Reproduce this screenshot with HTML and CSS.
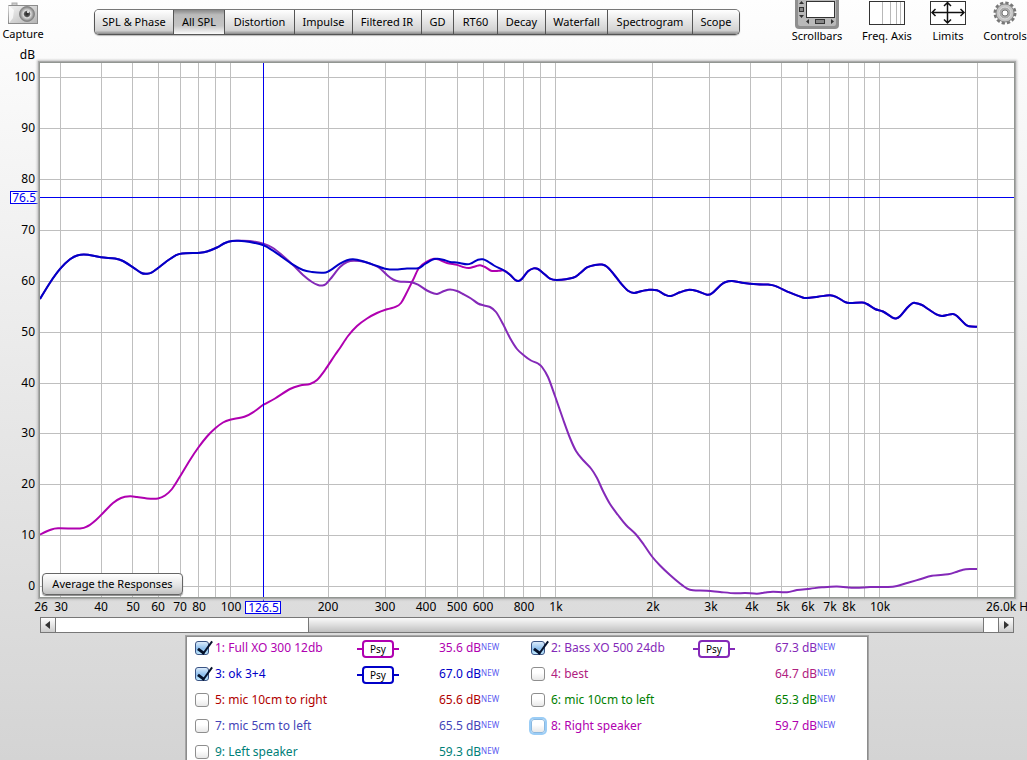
FILE: index.html
```html
<!DOCTYPE html>
<html lang="en">
<head>
<meta charset="utf-8">
<title>All SPL</title>
<link rel="stylesheet" href="styles.css">
</head>
<body>
<header class="top">
  <button class="tool tool-capture" type="button">
    <svg width="32" height="23" viewBox="0 0 32 23" aria-hidden="true">
      <defs>
        <linearGradient id="cam" x1="0" y1="0" x2="1" y2="1"><stop offset="0" stop-color="#f4f4f4"/><stop offset="1" stop-color="#b4b4b4"/></linearGradient>
        <radialGradient id="lens"><stop offset="0" stop-color="#222"/><stop offset=".35" stop-color="#555"/><stop offset=".5" stop-color="#ddd"/><stop offset="1" stop-color="#777"/></radialGradient>
      </defs>
      <rect x="5" y="2" width="5" height="3" fill="#ccc" stroke="#aaa"/>
      <rect x="1.500" y="4.500" width="29" height="18" fill="url(#cam)" stroke="#8c8c8c"/>
      <path d="M1 4l6 5-1 8-4 5" fill="#fff" opacity=".7"/>
      <circle cx="20" cy="13" r="7.500" fill="url(#lens)" stroke="#888"/>
      <circle cx="21" cy="11" r="1" fill="#fff"/>
    </svg>
    <span>Capture</span>
  </button>
  <nav class="tabs" aria-label="Graph">
    <button type="button">SPL &amp; Phase</button>
    <button type="button" class="on" aria-pressed="true">All SPL</button>
    <button type="button">Distortion</button>
    <button type="button">Impulse</button>
    <button type="button">Filtered IR</button>
    <button type="button">GD</button>
    <button type="button">RT60</button>
    <button type="button">Decay</button>
    <button type="button">Waterfall</button>
    <button type="button">Spectrogram</button>
    <button type="button">Scope</button>
  </nav>
  <div class="tools">
    <button class="tool tool-wide" type="button">
      <svg width="44" height="29" viewBox="0 0 44 29" aria-hidden="true">
        <path d="M0 0h44v25a4 4 0 0 1-4 4H4a4 4 0 0 1-4-4z" fill="#8f8f8f"/>
        <path d="M3 0h38v24a2 2 0 0 1-2 2H5a2 2 0 0 1-2-2z" fill="#b9b9b9"/>
        <rect x="11.500" y="1.500" width="28" height="16" fill="#fff" stroke="#333"/>
        <path d="M4 4l2.500-3L9 4zM4 15l2.500 3L9 15zM14 19v5l-3-2.500zM36 19v5l3-2.500z" fill="#333"/>
        <rect x="4.500" y="7.500" width="4" height="4" fill="#888" stroke="#333"/>
        <rect x="20.500" y="19.500" width="9" height="4" fill="#888" stroke="#333"/>
      </svg>
      <span>Scrollbars</span>
    </button>
    <button class="tool tool-wide" type="button">
      <svg width="36" height="29" viewBox="0 0 36 29" aria-hidden="true">
        <rect x=".5" y="1.500" width="35" height="23" fill="#fff" stroke="#333"/>
        <path d="M13.500 2v22M21.500 2v22M27.500 2v22M31.500 2v22" stroke="#b8b8b8"/>
      </svg>
      <span>Freq. Axis</span>
    </button>
    <button class="tool tool-slim" type="button">
      <svg width="36" height="29" viewBox="0 0 36 29" aria-hidden="true">
        <rect x=".5" y="1.500" width="35" height="23" fill="#fff" stroke="#333"/>
        <path d="M2 12.500h32M17.500 3v20M5.500 9L2 12.500 5.500 16M30.500 9l3.500 3.500-3.500 3.500M14 6l3.500-3.500L21 6M14 19.500l3.500 3.500 3.500-3.500" fill="none" stroke="#111" stroke-width="1.500"/>
      </svg>
      <span>Limits</span>
    </button>
    <button class="tool tool-mid" type="button">
      <svg width="24" height="29" viewBox="0 0 24 29" aria-hidden="true">
        <circle cx="12" cy="13" r="10" fill="none" stroke="#777" stroke-width="3" stroke-dasharray="3.200 2.036"/>
        <circle cx="12" cy="13" r="9" fill="#c4c4c4" stroke="#858585"/>
        <circle cx="12" cy="13" r="6" fill="#aaa" stroke="#ddd"/>
        <circle cx="12" cy="13" r="3" fill="#fff" stroke="#777"/>
      </svg>
      <span>Controls</span>
    </button>
  </div>
</header>

<main class="graph">
  <div class="unit">dB</div>
  <svg class="y-axis" id="yAxis" role="img" aria-label="Level axis"></svg>
  <section class="plot">
    <svg class="plot-area" viewBox="40 63 974 534" preserveAspectRatio="none" role="img" aria-label="Measured responses">
      <path id="grid" class="grid-line"/>
      <path id="curveFull" class="curve curve-full"/>
      <path id="curveBass" class="curve curve-bass"/>
      <path id="curveSum" class="curve curve-sum"/>
      <path class="cursor" d="M40 197.500H1014M263.500 63V597"/>
    </svg>
    <button class="average" type="button">Average the Responses</button>
  </section>
  <svg class="x-axis" id="xAxis" role="img" aria-label="Frequency axis"></svg>
  <div class="scroll">
    <button type="button" aria-label="Scroll left"><svg width="6" height="8" viewBox="0 0 6 8"><path d="M5 0v8L0 4z"/></svg></button>
    <div class="track">
      <span class="before"></span><span class="thumb"></span><span class="after"></span>
    </div>
    <button type="button" aria-label="Scroll right"><svg width="6" height="8" viewBox="0 0 6 8"><path d="M1 0v8l5-4z"/></svg></button>
  </div>
  <section class="legend" aria-label="Measurements">
    <div class="item magenta"><input type="checkbox" id="m1" checked><label for="m1">1: Full XO 300 12db</label><span class="psy"><b>Psy</b></span><span class="value">35.6 dB</span><span class="new">NEW</span></div>
    <div class="item violet"><input type="checkbox" id="m2" checked><label for="m2">2: Bass XO 500 24db</label><span class="psy"><b>Psy</b></span><span class="value">67.3 dB</span><span class="new">NEW</span></div>
    <div class="item blue"><input type="checkbox" id="m3" checked><label for="m3">3: ok 3+4</label><span class="psy"><b>Psy</b></span><span class="value">67.0 dB</span><span class="new">NEW</span></div>
    <div class="item rose"><input type="checkbox" id="m4"><label for="m4">4: best</label><span></span><span class="value">64.7 dB</span><span class="new">NEW</span></div>
    <div class="item red"><input type="checkbox" id="m5"><label for="m5">5: mic 10cm to right</label><span></span><span class="value">65.6 dB</span><span class="new">NEW</span></div>
    <div class="item green"><input type="checkbox" id="m6"><label for="m6">6: mic 10cm to left</label><span></span><span class="value">65.3 dB</span><span class="new">NEW</span></div>
    <div class="item indigo"><input type="checkbox" id="m7"><label for="m7">7: mic 5cm to left</label><span></span><span class="value">65.5 dB</span><span class="new">NEW</span></div>
    <div class="item magenta"><input type="checkbox" id="m8" class="focused"><label for="m8">8: Right speaker</label><span></span><span class="value">59.7 dB</span><span class="new">NEW</span></div>
    <div class="item teal"><input type="checkbox" id="m9"><label for="m9">9: Left speaker</label><span></span><span class="value">59.3 dB</span><span class="new">NEW</span></div>
  </section>
</main>
<script src="graph.js"></script>
</body>
</html>
```

FILE: styles.css
```css
* { box-sizing: border-box; }

body {
  margin: 0;
  min-height: 100vh;
  display: flex;
  flex-direction: column;
  overflow: hidden;
  background: linear-gradient(#fefefe, #d4d4d4);
  color: #000;
  font: 12px/16px "Noto Sans", "Open Sans", sans-serif;
}

button { font: inherit; color: inherit; padding: 0; }

.top {
  display: flex;
  align-items: flex-start;
  height: 45px;
  font-size: 11px;
}

.tool {
  display: flex;
  flex-direction: column;
  align-items: center;
  border: 0;
  background: none;
  line-height: 14px;
  white-space: nowrap;
}
.tool svg { display: block; flex: none; }
.tool-capture { width: 46px; padding-top: 1px; gap: 3px; }
.tool-wide { width: 54px; }
.tool-slim { width: 36px; }
.tool-mid { width: 46px; }
.tools { display: flex; gap: 16px; margin: 0 -1px 0 auto; }

.tabs {
  display: grid;
  grid-template-columns: 79px 51px 70px 58px 69px 32px 44px 48px 62px 85px 46px;
  height: 26px;
  margin: 9px 0 0 48px;
  border: 1px solid #555;
  border-top-color: #777;
  border-radius: 5px;
  overflow: hidden;
  box-shadow: 0 1px 1px #bbb;
}
.tabs button {
  border: 0;
  border-right: 1px solid #555;
  background: linear-gradient(#fff, #e9e9e9 40%, #d2d2d2 85%, #8a8a8a);
}
.tabs button:last-child { border-right: 0; }
.tabs .on { background: linear-gradient(#8a8a8a, #bbb 20%, #c4c4c4 65%, #fafafa); }

.graph {
  flex: 1;
  display: grid;
  grid-template-columns: 40px minmax(0, 1fr) 13px;
  grid-template-rows: 18px minmax(200px, 1fr) 20px 16px auto;
}
.unit { padding-right: 5px; text-align: right; line-height: 19px; }

.plot {
  grid-area: 2 / 2;
  position: relative;
  background: #fff;
  box-shadow: 0 0 0 1px #929692, 0 0 0 2px #aaa, 0 0 2px 3px #c4c4c4;
}
.plot-area { display: block; position: absolute; width: 100%; height: 100%; }
.grid-line { stroke: #bfbfbf; vector-effect: non-scaling-stroke; shape-rendering: crispEdges; }
.curve { fill: none; stroke-width: 2; vector-effect: non-scaling-stroke; }
.curve-full { stroke: #b000b0; }
.curve-bass { stroke: #8429b8; }
.curve-sum { stroke: #0000c8; }
.cursor { fill: none; stroke: #0000f0; vector-effect: non-scaling-stroke; shape-rendering: crispEdges; }

.average {
  position: absolute;
  left: 2px;
  bottom: 2px;
  padding: 2px 9px;
  min-width: 141px;
  border: 1px solid #666;
  border-radius: 4px;
  background: linear-gradient(#fff, #e2e2e2 60%, #c2c2c2);
  box-shadow: 0 1px 1px #888;
  font-size: 11px;
}

.y-axis, .x-axis { display: block; width: 100%; height: 100%; overflow: visible; }
.y-axis { grid-area: 2 / 1; }
.x-axis { grid-area: 3 / 2; }
.y-axis text { text-anchor: end; }
.x-axis text { text-anchor: middle; }
.x-axis .limit { text-anchor: start; }
.marker { fill: #fff; stroke: #0000f0; }
.marker-text { fill: #0000f0; }

.scroll {
  grid-area: 4 / 2;
  display: flex;
  border: 1px solid #777;
  background: #fff;
}
.scroll button {
  display: flex;
  align-items: center;
  justify-content: center;
  width: 15px;
  border: 0;
  background: linear-gradient(#fff, #ccc);
}
.scroll path { fill: #333; }
.scroll button:first-child { border-right: 1px solid #777; }
.scroll button:last-child { border-left: 1px solid #777; }
.track { flex: 1; display: flex; }
.before { flex: 252; }
.after { flex: 14; }
.thumb {
  flex: 675;
  border: solid #777;
  border-width: 0 1px;
  background: linear-gradient(#fafafa, #dedede 50%, #c0c0c0);
}

.legend {
  grid-area: 5 / 2;
  justify-self: center;
  width: 100%;
  max-width: 680px;
  margin-top: 4px;
  padding: 3px 0 0 8px;
  display: grid;
  grid-template-columns: repeat(2, 336px);
  grid-auto-rows: 16px;
  row-gap: 10px;
  background: #fff;
  box-shadow: 0 0 0 1px #8c8c8c, 0 0 0 2px #a6a6a6;
}
.item {
  display: grid;
  grid-template-columns: 20px 142px 82px auto 1fr;
  align-items: center;
  white-space: nowrap;
}
.item input {
  appearance: none;
  position: relative;
  width: 14px;
  height: 14px;
  margin: 0;
  border: 1px solid #8e8e8e;
  border-radius: 3px;
  background: linear-gradient(#fff 40%, #e8e8e8);
}
.item input:checked {
  border-color: #3b5484;
  background: linear-gradient(#dcecfb, #8fc0ee 55%, #bfe9ff);
}
.item input:checked::after {
  content: "";
  position: absolute;
  left: 5px;
  top: -4px;
  width: 6px;
  height: 13px;
  border: solid #06122b;
  border-width: 0 2px 3px 0;
  transform: rotate(36deg);
}
.item input.focused { border-color: #8ab8e0; box-shadow: 0 0 0 2px #9bcdf6; }

.psy { display: flex; align-items: center; width: 42px; height: 18px; margin-bottom: -2px; }
.psy::before, .psy::after { content: ""; flex: 1; height: 2px; background: currentColor; }
.psy b {
  width: 32px;
  height: 18px;
  border: 2px solid currentColor;
  border-radius: 4px;
  font-size: 10px;
  font-weight: normal;
  line-height: 15px;
  text-align: center;
}
.psy b::first-line { color: #000; }
.new { font-size: 8px; line-height: 13px; align-self: start; color: #5a5af0; }

.magenta { color: #b000b0; }
.violet { color: #8429b8; }
.blue { color: #0000c8; }
.rose { color: #b02080; }
.red { color: #b00000; }
.green { color: #008000; }
.indigo { color: #4444b8; }
.teal { color: #008078; }
```

FILE: graph.js
```js
const AREA = { x: 40, y: 63, w: 974, h: 534 };
const SVG = "http://www.w3.org/2000/svg";

const levels = [[100, 77], [90, 128], [80, 179], [70, 230], [60, 281], [50, 332], [40, 383], [30, 433], [20, 484], [10, 535], [0, 586]];
const gridX = [60, 101, 132, 158, 180, 198, 215, 230, 328, 385, 425, 457, 483, 504, 523, 540, 555, 652, 709, 750, 781, 807, 829, 848, 864, 879, 977];
const freqs = [["26", 41], ["30", 61], ["40", 101], ["50", 133], ["60", 158], ["70", 180], ["80", 199], ["100", 231], ["200", 328], ["300", 385], ["400", 426], ["500", 457], ["600", 483], ["800", 524], ["1k", 556], ["2k", 653], ["3k", 711], ["4k", 752], ["5k", 783], ["6k", 808], ["7k", 830], ["8k", 849], ["10k", 880]];

const shared = "40,299 50,282.7 60.3,268.7 70,259.3 78,255.2 88,254.8 101,257.3 115,258.5 123,261 133,267.3 141.5,273 147,273.7 151.5,272.7 158,268 167,261 175,255.8 182,253.5 200,252.7 207,251.5 217,247.5 225,243 232,241 238.5,240.7 ";
const upper = " 504,270.5 510,274.7 515,279.7 518.5,281 522,278.7 528,271.3 533.5,268.4 538,269 544,273.7 550,278.7 557,280 573,277.7 580,273.3 587,267.4 595,264.9 602,264.6 607,266.7 612,272 622,284.7 628,290.7 634,293 642,291 648,289.9 657,290.3 665,294.7 671,296 680,292.3 688,289.9 697,291 707,294.7 712,293.3 720,285.7 725,282.3 732,281 742,282.7 757,284.3 768,284.6 775,285.9 790,292.7 802,297.3 807,298 818,296.7 830,295.3 837,297.3 845,302 850,303 862,302.5 867,304 875,309 883,311.5 892,317.3 896,318.5 900,316.3 907,308 912,303.5 915,302.9 922,305 928,309 937,314.7 942,316 947,315 953,314 957,316 965,324 969,326.3 977,326.7";
const curves = {
  curveSum: shared + "250,242 263.5,245.3 273,250.7 293,264.7 303,270 312,272 322,272.8 328,271.7 340,263.7 347,260.3 353,259.3 362,261 377,266 385,268.7 395,269.6 407,268.5 418,268.3 425,264 432,259.8 437,258.7 443,259.7 450,261.9 458,262.7 467,264.3 472,263 478,259.7 483,259.3 488,261.6 494,265.5" + upper,
  curveBass: shared + "250,241 263.5,243.8 273,248 283,256 293,265 303,275 312,282 318,285 322,285.5 326,284 332,277 340,267 347,262 354,260.7 365,262 378,267 387,275 393,279.5 399,281.5 410,282 418,284.7 427,290.5 434,293.5 438,293.7 444,291 450,289.5 457,291 463,294 471,298.5 478,303.5 484,305.5 490,307 496,312 503,324 510,338 517,349 524,355.5 531,360.5 538,363.5 542,367 548,377 555,396 563,419 570,438 576,451 583,460 591,468.5 597,478 603,491 610,504 618,515 626,525 636,534.5 644,545 652,556.5 660,565.5 670,575 680,583.5 687,588.5 693,590.3 707,590.7 720,592 735,593.3 745,593 757,593.7 765,592.5 773,591.7 787,592.3 797,590 810,588.7 822,587.3 837,586.5 855,587.8 870,587 888,587 897,586 908,582.7 920,579.3 932,575.7 948,574.3 957,571.7 963,569.7 970,569 977,569",
  curveFull: "40,534.5 50,530 58,528.3 80,528.5 88,526 96,520 104,512 113,503 121,498 130,496.3 137,497 147,498.5 158,498.5 165,495.5 172,489 180,476.5 190,460 198,448 207,436.5 215,428.5 223,422.5 230,419.7 245,416.5 255,411 263.5,404.7 275,398.5 290,389 300,385.5 310,384 317,380 325,370 335,355 340,348 348,336 357,326 367,318.5 377,313 387,309.3 396,306.7 401,303 406,294 413,280 419,268 427,261.5 434,258.8 440,260 447,263 457,264.9 463,267 469,268 475,266.5 480,265.2 485,267 491,270.7 496,271 500,270.7" + upper
};

// Catmull-Rom spline through the points, written as cubic segments.
function smooth(text) {
  const p = text.trim().split(/\s+/).map(s => s.split(",").map(Number));
  let d = "M" + p[0];
  for (let i = 0; i < p.length - 1; i++) {
    const a = p[i - 1] || p[i], b = p[i], c = p[i + 1], e = p[i + 2] || c;
    d += `C${b[0] + (c[0] - a[0]) / 6} ${b[1] + (c[1] - a[1]) / 6} ${c[0] - (e[0] - b[0]) / 6} ${c[1] - (e[1] - b[1]) / 6} ${c[0]} ${c[1]}`;
  }
  return d;
}

function add(parent, name, attrs, text) {
  const el = document.createElementNS(SVG, name);
  for (const key in attrs) el.setAttribute(key, attrs[key]);
  if (text) el.textContent = text;
  parent.append(el);
}
const px = x => (x - AREA.x) / AREA.w * 100 + "%";
const py = y => (y - AREA.y) / AREA.h * 100 + "%";

document.getElementById("grid").setAttribute("d",
  levels.map(l => `M40 ${l[1] + 0.5}H1014`).join("") + gridX.map(x => `M${x + 0.5} 63V597`).join(""));
for (const id in curves) document.getElementById(id).setAttribute("d", smooth(curves[id]));

const yAxis = document.getElementById("yAxis");
for (const [label, y] of levels) add(yAxis, "text", { x: 35, y: py(y), dy: 4 }, String(label));
add(yAxis, "rect", { class: "marker", x: 10.5, y: py(191.5), width: 28, height: 12 });
add(yAxis, "text", { class: "marker-text", x: 36, y: py(202) }, "76.5");

const xAxis = document.getElementById("xAxis");
for (const [label, x] of freqs) add(xAxis, "text", { x: px(x), y: 14 }, label);
add(xAxis, "text", { class: "limit", x: px(986), y: 14 }, "26.0k Hz");
add(xAxis, "line", { class: "marker", x1: px(263.5), x2: px(263.5), y1: 0, y2: 4 });
add(xAxis, "rect", { class: "marker", x: px(245.5), y: 4.5, width: 35, height: 12 });
add(xAxis, "text", { class: "marker-text", x: px(263.5), y: 15 }, "126.5");
```
